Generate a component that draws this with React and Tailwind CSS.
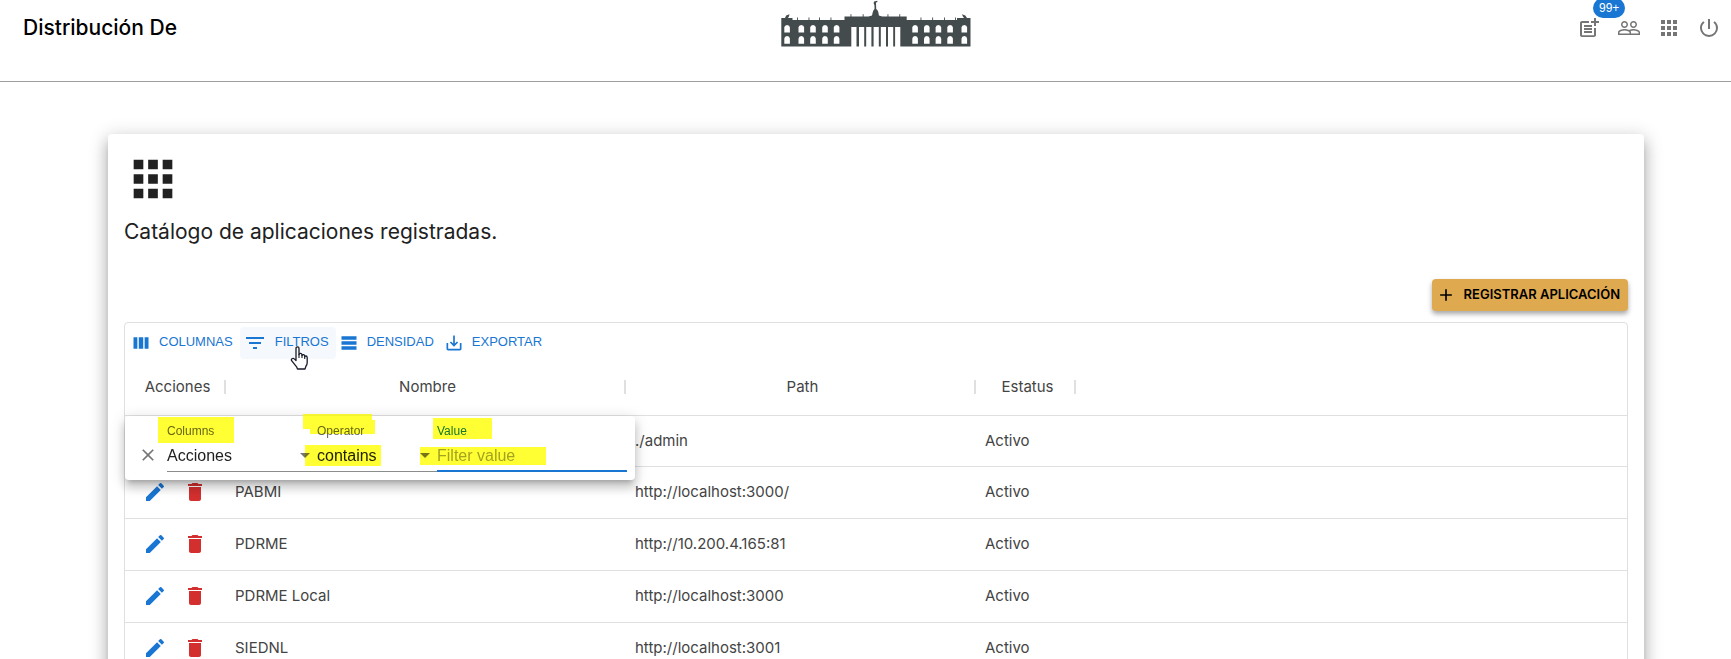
import React, { useState } from "react";
import {
  MdAdd,
  MdApps,
  MdArrowDropDown,
  MdClose,
  MdDelete,
  MdEdit,
  MdFilterList,
  MdPeopleOutline,
  MdPostAdd,
  MdPowerSettingsNew,
  MdSaveAlt,
} from "react-icons/md";

const rows = [
  { name: "ADMIN", path: "./admin", status: "Activo" },
  { name: "PABMI", path: "http://localhost:3000/", status: "Activo" },
  { name: "PDRME", path: "http://10.200.4.165:81", status: "Activo" },
  { name: "PDRME Local", path: "http://localhost:3000", status: "Activo" },
  { name: "SIEDNL", path: "http://localhost:3001", status: "Activo" },
];

function PalaceLogo() {
  const windows = [13.3, 27.5, 39.2, 51.2, 62.8, 141.3, 153, 164.6, 176.3, 190.5];
  const sideFinials = [26, 37.5, 48, 59.5, 149.5, 161.2, 173, 184];
  const centralFinials = [79.5, 91.7, 116.5, 128.3];
  return (
    <svg width="190" height="47" viewBox="10 0 190 47" role="img" aria-label="Palacio de Gobierno">
      <g fill="#434b4c">
        <path d="M10.300 46.500V18H21.500v2H73.500v-3.500H97.500L101 15.500l.8-3.500.7-1.800 1-1.200V5.500l-.9-2.500.6-1.500 3-.8.3 1.300-1.500.4.2 6.600 1.300 1.200.8 1.800.6 3.500 3.200 1H135.700V20H197v-2h2.500V46.500z" />
        <path d="M14 18l1.200-2.500 3.300-1.300-.5 2L17 18zM186 20v-2h11.500V20zM191 14.300l3.300 1.200L196 18h-3l-1.200-1.800z" />
        {sideFinials.map((x) => (
          <rect key={x} x={x} y="17.500" width="0.900" height="3.500" />
        ))}
        {centralFinials.map((x) => (
          <rect key={x} x={x} y="14.200" width="0.900" height="3.500" />
        ))}
      </g>
      <g fill="#fff">
        {windows.map((x) => (
          <g key={x}>
            <path d={`M${x} 32.500v-5q.2-2.300 2.800-2.500q2.600.2 2.800 2.500v5z`} />
            <path d={`M${x} 43.800v-5q.2-2.600 2.800-2.800q2.600.2 2.800 2.800v5z`} />
          </g>
        ))}
        {[80.3, 88, 95.2, 102.6, 109.8, 117, 124.1].map((x) => (
          <rect key={x} x={x} y="27" width="5.200" height="20" />
        ))}
      </g>
    </svg>
  );
}

function ColumnsIcon() {
  return (
    <svg width="20" height="20" viewBox="0 0 24 24" fill="currentColor" aria-hidden="true">
      <path d="M14.670 5v14H9.330V5h5.340zm1.700 14H21V5h-4.630v14zM7.630 19V5H3v14h4.630z" />
    </svg>
  );
}

function DensityIcon() {
  return (
    <svg width="20" height="20" viewBox="0 0 24 24" fill="currentColor" aria-hidden="true">
      <path d="M21 8H3V4h18v4zm0 2H3v4h18v-4zm0 6H3v4h18v-4z" />
    </svg>
  );
}

function HandPointer() {
  return (
    <svg className="pointer-events-none absolute top-[19px] left-[50px] z-20" width="19" height="24" viewBox="0 0 19 24" aria-hidden="true">
      <path
        d="M6 14.500V2.500q0-1.700 1.500-1.700T9 2.500v6q.3-1.300 1.500-1.200T12 8.700v.8q.3-1 1.400-.9T14.700 10v.8q.3-.9 1.300-.8t1.200 1.500v5q0 2-1.200 3.500l-1 3H7.500l-.7-1.800L2 15.200q-1.300-1.700 0-2.500t2.300.2z"
        fill="#fff"
        stroke="#1a1a2a"
        strokeWidth="1.300"
        strokeLinejoin="round"
      />
      <path d="M9 8v4M12 9v3M14.700 10.500V13" stroke="#1a1a2a" strokeWidth="1.100" fill="none" />
    </svg>
  );
}

function HeaderButton({ label, children }) {
  return (
    <button type="button" aria-label={label} className="relative flex size-10 items-center justify-center text-[#757575]">
      {children}
    </button>
  );
}

function ToolbarButton({ icon, active, children }) {
  return (
    <button
      type="button"
      className={`relative flex h-8 items-center gap-2 rounded pr-[7px] pl-[3px] text-[#1976d2] ${active ? "bg-[#f5f9fd]" : ""}`}
    >
      {icon}
      <span className="pb-0.5">{children}</span>
      {active && <HandPointer />}
    </button>
  );
}

function SelectField({ id, label, width, value, onChange, options }) {
  return (
    <div className={`relative flex flex-col ${width}`}>
      <label htmlFor={id} className="text-xs leading-4 text-[#666]">{label}</label>
      <select
        id={id}
        value={value}
        onChange={onChange}
        className="h-[33px] appearance-none border-b border-[#8c8c8c] bg-transparent pt-0.5 text-base text-[#212121] outline-none"
      >
        {options.map((o) => (
          <option key={o}>{o}</option>
        ))}
      </select>
      <MdArrowDropDown size={24} className="pointer-events-none absolute top-5 right-0 text-[#757575]" />
    </div>
  );
}

function Highlights() {
  return (
    <div aria-hidden="true" className="pointer-events-none absolute inset-0 mix-blend-multiply">
      <div className="absolute top-px left-[33px] h-[26px] w-[76px] bg-[#ffff33]" />
      <svg className="absolute -top-0.5 left-[178px]" width="72" height="20" viewBox="0 0 72 20">
        <path d="M0 0h69v6h3v14H7v-5H0z" fill="#ffff33" />
      </svg>
      <div className="absolute top-[29px] left-[180px] h-[21px] w-[76px] bg-[#ffff33]" />
      <div className="absolute top-0.5 left-[308px] h-[21px] w-[59px] bg-[#ffff33]" />
      <div className="absolute top-[31px] left-[295px] h-[18px] w-[126px] bg-[#ffff33]" />
    </div>
  );
}

function FilterPanel() {
  const [column, setColumn] = useState("Acciones");
  const [operator, setOperator] = useState("contains");
  const [value, setValue] = useState("");
  return (
    <div className="absolute top-full left-0 z-10 flex rounded bg-white pt-[7px] pr-2 pb-2 pl-2 font-['Liberation_Sans',sans-serif] font-normal shadow-[0_5px_5px_-3px_rgba(0,0,0,0.2),0_8px_10px_1px_rgba(0,0,0,0.14),0_3px_14px_2px_rgba(0,0,0,0.12)]">
      <button type="button" aria-label="Eliminar filtro" className="mr-1 flex w-[30px] items-end justify-center pb-[7px] text-[#757575]">
        <MdClose size={20} />
      </button>
      <SelectField id="filter-column" label="Columns" width="w-[150px]" value={column} onChange={(e) => setColumn(e.target.value)} options={["Acciones", "Nombre", "Path", "Estatus"]} />
      <SelectField id="filter-operator" label="Operator" width="w-[120px]" value={operator} onChange={(e) => setOperator(e.target.value)} options={["contains", "equals"]} />
      <div className="flex w-[190px] flex-col">
        <label htmlFor="filter-value" className="text-xs leading-4 text-[#1976d2]">Value</label>
        <input
          id="filter-value"
          value={value}
          onChange={(e) => setValue(e.target.value)}
          placeholder="Filter value"
          className="h-[33px] border-b-2 border-[#1976d2] bg-transparent pt-[3px] text-base outline-none placeholder:text-[#a3a3a3]"
        />
      </div>
      <Highlights />
    </div>
  );
}

function HeadCell({ children }) {
  return (
    <th scope="col" className="h-[57px] border-b border-[#e0e0e0] p-0 font-normal">
      <div className="-mr-px flex items-center">
        <span className="flex-1 pl-1.5 text-center">{children}</span>
        <span className="h-3.5 w-0.5 bg-[#e0e0e0]" />
      </div>
    </th>
  );
}

export default function App() {
  const cell = "border-b border-[#e0e0e0] px-2.5 py-0";
  return (
    <div className="h-screen overflow-hidden bg-white font-[Inter,sans-serif] text-[#212121]">
      <header className="grid h-[82px] grid-cols-[1fr_auto_1fr] items-start border-b border-[#9e9e9e] pr-0.5 pl-[22px]">
        <h1 className="pt-[13px] pl-px text-[21px] leading-[30px] font-medium text-black">Distribución De</h1>
        <PalaceLogo />
        <nav className="flex justify-end pt-2">
          <HeaderButton label="Notificaciones">
            <MdPostAdd size={24} />
            <span className="absolute -top-2.5 left-6 flex h-5 items-center rounded-full bg-[#1976d2] px-1.5 font-['Liberation_Sans',sans-serif] text-xs text-white">
              99+
            </span>
          </HeaderButton>
          <HeaderButton label="Usuarios"><MdPeopleOutline size={24} /></HeaderButton>
          <HeaderButton label="Aplicaciones"><MdApps size={24} /></HeaderButton>
          <HeaderButton label="Salir"><MdPowerSettingsNew size={24} /></HeaderButton>
        </nav>
      </header>

      <main className="pt-[52px] pr-[87px] pl-27">
        <section className="rounded bg-white p-4 shadow-[0_6px_6px_-3px_rgba(0,0,0,0.2),0_10px_14px_1px_rgba(0,0,0,0.16),0_4px_18px_3px_rgba(0,0,0,0.16)]">
          <MdApps size={58} />
          <h2 className="mt-2 text-[21px] leading-8 font-normal">Catálogo de aplicaciones registradas.</h2>
          <div className="mt-[31px] flex justify-end">
            <button
              type="button"
              className="flex h-8 items-center gap-2 rounded bg-[#dfa94f] pr-2 pl-1 text-[13px] font-semibold text-black shadow-[0_3px_5px_rgba(0,0,0,0.35)]"
            >
              <MdAdd size={20} />
              REGISTRAR APLICACIÓN
            </button>
          </div>

          <div className="mt-[11px] rounded border border-[#e0e0e0]">
            <div className="flex pt-1 pl-[3px] font-['Liberation_Sans',sans-serif] text-[13px]">
              <ToolbarButton icon={<ColumnsIcon />}>COLUMNAS</ToolbarButton>
              <ToolbarButton active icon={<MdFilterList size={24} />}>FILTROS</ToolbarButton>
              <ToolbarButton icon={<DensityIcon />}>DENSIDAD</ToolbarButton>
              <ToolbarButton icon={<MdSaveAlt size={20} />}>EXPORTAR</ToolbarButton>
            </div>
            <div className="relative">
              <table className="w-full table-fixed border-separate border-spacing-0 text-[15px] text-[#444]">
                <colgroup>
                  <col className="w-[100px]" />
                  <col className="w-[400px]" />
                  <col className="w-[350px]" />
                  <col className="w-[100px]" />
                  <col />
                </colgroup>
                <thead>
                  <tr>
                    <HeadCell>Acciones</HeadCell>
                    <HeadCell>Nombre</HeadCell>
                    <HeadCell>Path</HeadCell>
                    <HeadCell>Estatus</HeadCell>
                    <td className="border-b border-[#e0e0e0]" />
                  </tr>
                </thead>
                <tbody>
                  {rows.map((r) => (
                    <tr key={r.name} className="h-[52px] first:h-[51px]">
                      <td className={cell}>
                        <div className="flex gap-4 pb-0.5 pl-2">
                          <button type="button" aria-label={`Editar ${r.name}`} className="text-[#1976d2]"><MdEdit size={24} /></button>
                          <button type="button" aria-label={`Eliminar ${r.name}`} className="text-[#d32f2f]"><MdDelete size={24} /></button>
                        </div>
                      </td>
                      <td className={cell}>{r.name}</td>
                      <td className={cell}>{r.path}</td>
                      <td className={cell}>{r.status}</td>
                      <td className={cell} />
                    </tr>
                  ))}
                </tbody>
              </table>
              <div className="absolute top-[57px] left-0"><FilterPanel /></div>
            </div>
          </div>
        </section>
      </main>
    </div>
  );
}
